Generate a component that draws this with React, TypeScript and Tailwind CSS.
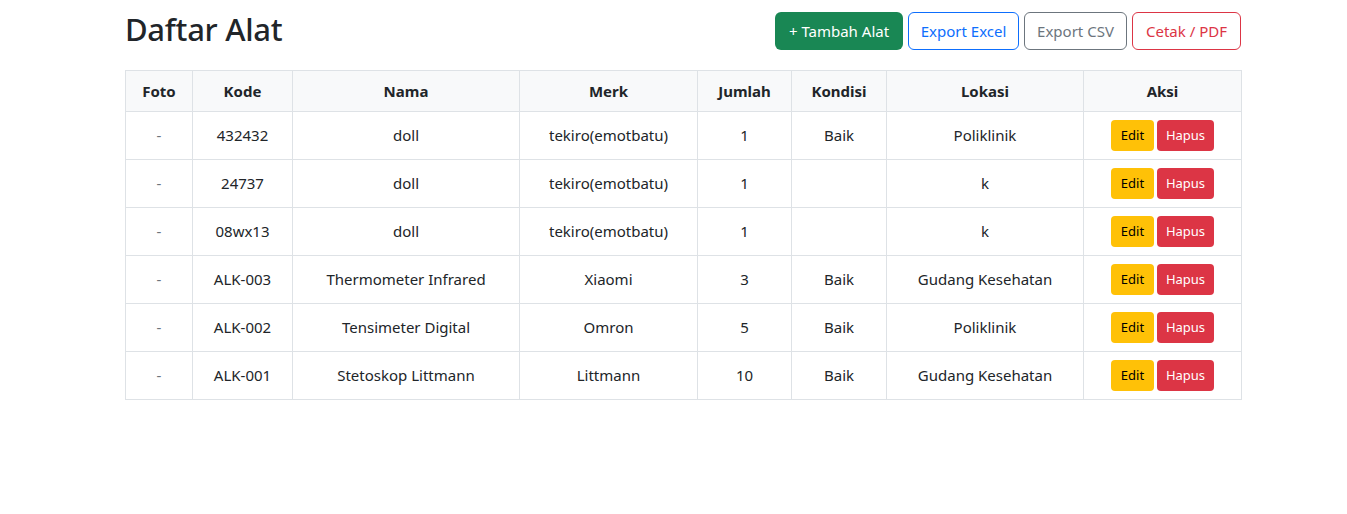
const rows = [
  { kode: '432432', nama: 'doll', merk: 'tekiro(emotbatu)', jumlah: 1, kondisi: 'Baik', lokasi: 'Poliklinik' },
  { kode: '24737', nama: 'doll', merk: 'tekiro(emotbatu)', jumlah: 1, kondisi: '', lokasi: 'k' },
  { kode: '08wx13', nama: 'doll', merk: 'tekiro(emotbatu)', jumlah: 1, kondisi: '', lokasi: 'k' },
  { kode: 'ALK-003', nama: 'Thermometer Infrared', merk: 'Xiaomi', jumlah: 3, kondisi: 'Baik', lokasi: 'Gudang Kesehatan' },
  { kode: 'ALK-002', nama: 'Tensimeter Digital', merk: 'Omron', jumlah: 5, kondisi: 'Baik', lokasi: 'Poliklinik' },
  { kode: 'ALK-001', nama: 'Stetoskop Littmann', merk: 'Littmann', jumlah: 10, kondisi: 'Baik', lokasi: 'Gudang Kesehatan' },
];

const cols = [
  { label: 'Foto', w: 'w-[67px]' },
  { label: 'Kode', w: 'w-[100px]' },
  { label: 'Nama', w: 'w-[227px]' },
  { label: 'Merk', w: 'w-[178px]' },
  { label: 'Jumlah', w: 'w-[94px]' },
  { label: 'Kondisi', w: 'w-[95px]' },
  { label: 'Lokasi', w: 'w-[197px]' },
  { label: 'Aksi', w: 'w-[158px]' },
];

const App = () => {
  return (
    <div className="min-h-[514px] bg-white pl-[125px] text-[#212529] font-['Segoe_UI','Noto_Sans',sans-serif]">
      <div className="w-[1116px]">
        <div className="flex items-center justify-between pt-3 mb-5">
          <h2 className="text-[31px] leading-[38px] font-medium tracking-[-0.3px] -mt-1">Daftar Alat</h2>
          <div className="flex gap-[5px] text-[15px]">
            <button className="w-[128px] h-[38px] rounded-md bg-[#198754] text-white">+ Tambah Alat</button>
            <button className="w-[111px] h-[38px] rounded-md border border-[#0d6efd] text-[#0d6efd]">Export Excel</button>
            <button className="w-[103px] h-[38px] rounded-md border border-[#6c757d] text-[#6c757d]">Export CSV</button>
            <button className="w-[109px] h-[38px] rounded-md border border-[#dc3545] text-[#dc3545]">Cetak / PDF</button>
          </div>
        </div>

        <table className="w-full table-fixed border-collapse text-center text-[15px]">
          <thead>
            <tr className="bg-[#f8f9fa]">
              {cols.map((c) => (
                <th key={c.label} className={`${c.w} h-[41px] border border-[#dee2e6] font-bold`}>{c.label}</th>
              ))}
            </tr>
          </thead>
          <tbody>
            {rows.map((r) => (
              <tr key={r.kode} className="h-[48px]">
                <td className="border border-[#dee2e6] text-[#6c757d]">-</td>
                <td className="border border-[#dee2e6]">{r.kode}</td>
                <td className="border border-[#dee2e6]">{r.nama}</td>
                <td className="border border-[#dee2e6]">{r.merk}</td>
                <td className="border border-[#dee2e6]">{r.jumlah}</td>
                <td className="border border-[#dee2e6]">{r.kondisi}</td>
                <td className="border border-[#dee2e6]">{r.lokasi}</td>
                <td className="border border-[#dee2e6]">
                  <div className="flex justify-center gap-[3px] text-[13px]">
                    <button className="w-[43px] h-[31px] rounded bg-[#ffc107] text-black">Edit</button>
                    <button className="w-[57px] h-[31px] rounded bg-[#dc3545] text-white">Hapus</button>
                  </div>
                </td>
              </tr>
            ))}
          </tbody>
        </table>
      </div>
    </div>
  );
};

export default App;
